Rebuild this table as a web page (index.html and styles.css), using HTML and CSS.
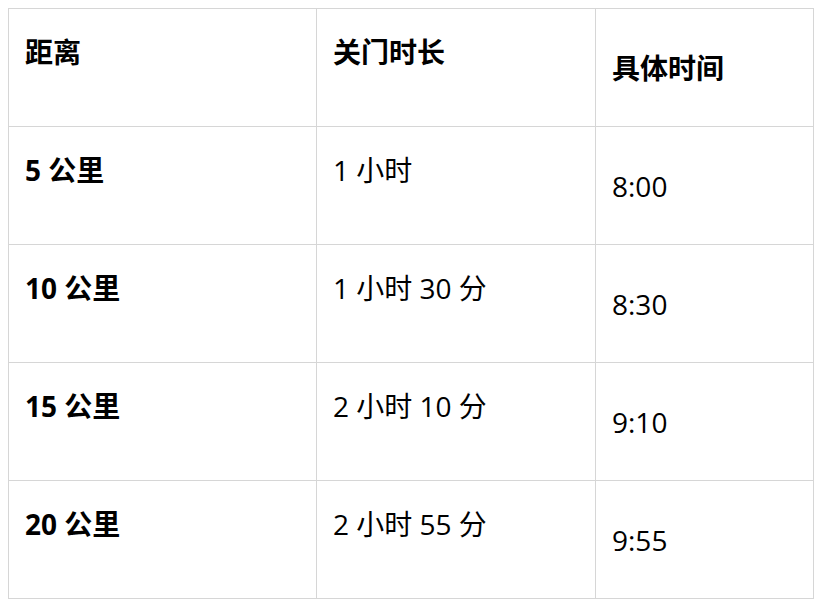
FILE: index.html
```html
<!DOCTYPE html>
<html lang="zh-CN">
<head>
<meta charset="utf-8">
<title>关门时间</title>
<link rel="stylesheet" href="styles.css">
</head>
<body>
<table class="cutoff">
  <colgroup>
    <col class="c1">
    <col class="c2">
    <col class="c3">
  </colgroup>
  <thead>
    <tr>
      <th>距离</th>
      <th>关门时长</th>
      <th class="time">具体时间</th>
    </tr>
  </thead>
  <tbody>
    <tr>
      <th>5 公里</th>
      <td>1 小时</td>
      <td class="time">8:00</td>
    </tr>
    <tr>
      <th>10 公里</th>
      <td>1 小时 30 分</td>
      <td class="time">8:30</td>
    </tr>
    <tr>
      <th>15 公里</th>
      <td>2 小时 10 分</td>
      <td class="time">9:10</td>
    </tr>
    <tr>
      <th>20 公里</th>
      <td>2 小时 55 分</td>
      <td class="time">9:55</td>
    </tr>
  </tbody>
</table>
</body>
</html>
```
FILE: styles.css
```css
html, body {
  margin: 0;
  padding: 0;
  background: #ffffff;
}
body {
  padding: 8px;
  font-family: "Open Sans", "Noto Sans CJK SC", sans-serif;
  color: #000000;
}
.cutoff {
  border-collapse: collapse;
  table-layout: fixed;
  width: 805px;
}
.c1 { width: 308px; }
.c2 { width: 279px; }
.c3 { width: 218px; }
.cutoff th,
.cutoff td {
  border: 1px solid #d6d6d6;
  height: 118px;
  box-sizing: border-box;
  padding: 22px 16px 0 16px;
  vertical-align: top;
  text-align: left;
  font-size: 28px;
  line-height: 42px;
  font-weight: 400;
}
.cutoff th {
  font-weight: 700;
}
.cutoff td.time,
.cutoff th.time {
  padding-top: 38px;
}
```
